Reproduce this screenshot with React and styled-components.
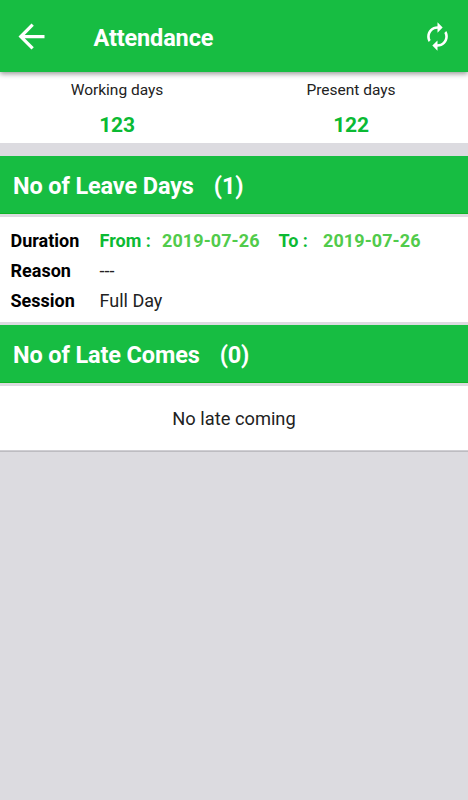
import React from "react";
import styled, { createGlobalStyle } from "styled-components";

const GlobalStyle = createGlobalStyle`
  * {
    box-sizing: border-box;
  }
  body {
    margin: 0;
    background: #dcdbe0;
    font-family: Roboto, "Liberation Sans", sans-serif;
    color: #222;
  }
`;

const Screen = styled.div`
  width: 100%;
  min-height: 100vh;
  display: flex;
  flex-direction: column;
  background: #dcdbe0;
`;

const Toolbar = styled.header`
  height: 72px;
  padding: 0 15.5px 0 12px;
  display: flex;
  align-items: center;
  background: #17bd42;
  color: #fff;
  box-shadow: 0 2px 5px rgba(0, 0, 0, 0.4);
  z-index: 1;
`;

const Title = styled.h1`
  flex: 1;
  margin: 3px 0 0 42.5px;
  font-size: 23.5px;
  font-weight: 700;
  line-height: 28px;
  letter-spacing: -0.15px;
`;

const IconButton = styled.button`
  display: flex;
  padding: 0;
  border: none;
  background: none;
  color: inherit;
  & svg {
    width: ${props => props.size}px;
    height: ${props => props.size}px;
    fill: currentColor;
  }
`;

const Stats = styled.section`
  height: 71px;
  display: grid;
  grid-template-columns: 1fr 1fr;
  background: #fff;
  text-align: center;
`;

const StatLabel = styled.div`
  padding-top: 8px;
  font-size: 15.5px;
  line-height: 20px;
`;

const StatValue = styled.div`
  margin-top: 12px;
  font-size: 21px;
  font-weight: 700;
  line-height: 26px;
  letter-spacing: -0.2px;
  color: #0bba33;
`;

const SectionTitle = styled.h2`
  height: 58px;
  margin: ${props => props.gap}px 0 3px;
  padding: 3px 13px 0;
  display: flex;
  align-items: center;
  gap: 20px;
  background: #17bd42;
  border-bottom: 1px solid #0fb426;
  color: #fff;
  font-size: 23.5px;
  font-weight: 700;
  letter-spacing: -0.13px;
`;

const LeaveCard = styled.section`
  height: 105px;
  padding: 9px 10.5px 0;
  background: #fff;
`;

const Row = styled.div`
  height: 30px;
  display: flex;
  font-size: 18px;
  line-height: 30px;
`;

const Label = styled.div`
  width: 89px;
  font-weight: 700;
  color: #000;
`;

const Word = styled.span`
  width: ${props => props.width}px;
  font-weight: 700;
  color: #0bba33;
`;

const DateText = styled.span`
  width: ${props => props.width}px;
  font-weight: 700;
  letter-spacing: 0.08px;
  color: #51cb4b;
`;

const Empty = styled.section`
  height: 64px;
  padding-top: 2px;
  display: flex;
  align-items: center;
  justify-content: center;
  background: #fff;
  box-shadow: 0 1px 0 #cfced3, 0 2px 0 #bdbcc1;
  font-size: 18.3px;
  line-height: 22px;
`;

const stats = [
  { label: "Working days", value: 123 },
  { label: "Present days", value: 122 }
];

export default class App extends React.Component {
  render() {
    return (
      <Screen>
        <GlobalStyle />
        <Toolbar>
          <IconButton size={39} aria-label="Back">
            <svg viewBox="0 0 24 24">
              <path d="M20 11H7.83l5.59-5.59L12 4l-8 8 8 8 1.41-1.41L7.83 13H20v-2z" />
            </svg>
          </IconButton>
          <Title>Attendance</Title>
          <IconButton size={31} aria-label="Refresh">
            <svg viewBox="0 0 24 24">
              <path d="M12 6v3l4-4-4-4v3c-4.42 0-8 3.58-8 8 0 1.57.46 3.03 1.24 4.26L6.7 14.8c-.45-.83-.7-1.79-.7-2.8 0-3.31 2.69-6 6-6zm6.76 1.74L17.3 9.2c.44.84.7 1.79.7 2.8 0 3.31-2.69 6-6 6v-3l-4 4 4 4v-3c4.42 0 8-3.58 8-8 0-1.57-.46-3.03-1.24-4.26z" />
            </svg>
          </IconButton>
        </Toolbar>
        <Stats>
          {stats.map(stat => (
            <div key={stat.label}>
              <StatLabel>{stat.label}</StatLabel>
              <StatValue>{stat.value}</StatValue>
            </div>
          ))}
        </Stats>
        <SectionTitle gap={13}>
          <span>No of Leave Days</span>
          <span>(1)</span>
        </SectionTitle>
        <LeaveCard>
          <Row>
            <Label>Duration</Label>
            <Word width={62.5}>From :</Word>
            <DateText width={116.5}>2019-07-26</DateText>
            <Word width={44.5}>To :</Word>
            <DateText width={116}>2019-07-26</DateText>
          </Row>
          <Row>
            <Label>Reason</Label>
            <span>---</span>
          </Row>
          <Row>
            <Label>Session</Label>
            <span>Full Day</span>
          </Row>
        </LeaveCard>
        <SectionTitle gap={3}>
          <span>No of Late Comes</span>
          <span>(0)</span>
        </SectionTitle>
        <Empty>No late coming</Empty>
      </Screen>
    );
  }
}
